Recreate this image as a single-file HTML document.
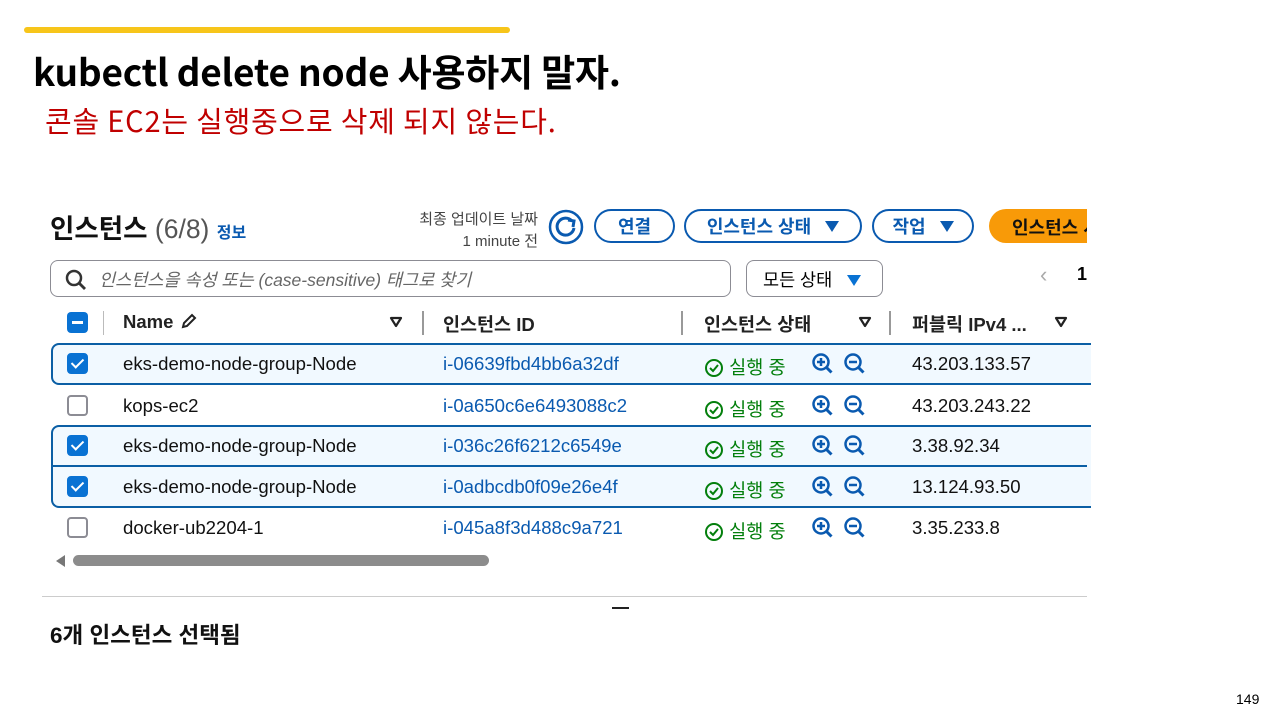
<!DOCTYPE html>
<html><head><meta charset="utf-8"><style>
*{margin:0;padding:0;box-sizing:border-box}
body{width:1280px;height:720px;background:#fff;position:relative;overflow:hidden;font-family:"Liberation Sans","Noto Sans CJK KR",sans-serif;color:#000}
.a{position:absolute;white-space:nowrap}
.btn{position:absolute;height:34px;border:2px solid #0a5ab0;border-radius:17px;color:#0a5ab0;font-weight:bold;font-size:18px;display:flex;align-items:center;justify-content:center;gap:14px}
.tri{display:inline-block;width:0;height:0;border-left:7px solid transparent;border-right:7px solid transparent;border-top:11px solid #0a5ab0}
.row{position:absolute;left:52px;width:1035px;height:41px;font-size:18.6px;color:#111}
.cb{position:absolute;left:15px;top:10px;width:21px;height:21px;border-radius:4px;border:2px solid #8c8c94;background:#fff}
.cb.on{background:#0972d3;border-color:#0972d3}
.cb.on::after{content:"";position:absolute;left:5px;top:1px;width:5px;height:10px;border:solid #fff;border-width:0 2.5px 2.5px 0;transform:rotate(45deg)}
.row span{position:absolute;top:10px}
.id{left:391px;color:#0a5ab0}
.st{left:652px;color:#037f0c}
.ip{left:860px}
.hd{font-weight:bold;font-size:18.5px;color:#222}
</style></head><body>
<div class="a" style="left:24px;top:27px;width:486px;height:6px;background:#f7c51a;border-radius:3px"></div>
<div class="a" style="left:33px;top:43px;font-size:37px;font-weight:bold;font-family:'Noto Sans CJK KR','Liberation Sans',sans-serif;letter-spacing:-0.2px">kubectl delete node 사용하지 말자.</div>
<div class="a" style="left:45px;top:99px;font-size:29px;color:#c00000;font-family:'Noto Sans CJK KR',sans-serif;letter-spacing:0.8px">콘솔 EC2는 실행중으로 삭제 되지 않는다.</div>

<div class="a" style="left:50px;top:207px;font-size:26.5px;font-weight:bold;color:#111">인스턴스 <span style="font-weight:normal;color:#555">(6/8)</span> <span style="font-size:16px;color:#0a5ab0">정보</span></div>
<div class="a" style="left:400px;top:209px;font-size:15px;color:#444;text-align:right;width:138px;line-height:22px">최종 업데이트 날짜<br>1 minute 전</div>
<svg class="a" style="left:548px;top:209px" width="36" height="36" viewBox="0 0 36 36"><circle cx="18" cy="18" r="16" fill="none" stroke="#0a5ab0" stroke-width="2.5"/><path d="M24 12a8.5 8.5 0 1 0 2 7" fill="none" stroke="#0a5ab0" stroke-width="3"/><path d="M20 11l6 1-1 6" fill="none" stroke="#0a5ab0" stroke-width="3"/></svg>
<div class="btn" style="left:594px;top:209px;width:81px">연결</div>
<div class="btn" style="left:684px;top:209px;width:178px">인스턴스 상태 <i class="tri"></i></div>
<div class="btn" style="left:872px;top:209px;width:102px">작업 <i class="tri"></i></div>
<div class="a" style="left:989px;top:209px;width:110px;height:34px;background:#f89a08;border-radius:17px 0 0 17px;font-weight:bold;font-size:18px;padding:5px 0 0 23px;color:#111">인스턴스 시</div>
<div class="a" style="left:1087px;top:200px;width:193px;height:460px;background:#fff"></div>

<div class="a" style="left:50px;top:260px;width:681px;height:37px;border:1.5px solid #8c8c94;border-radius:8px"></div>
<svg class="a" style="left:64px;top:268px" width="24" height="24" viewBox="0 0 24 24"><circle cx="10" cy="10" r="7" fill="none" stroke="#333" stroke-width="2.5"/><path d="M15 15l6 6" stroke="#333" stroke-width="2.8"/></svg>
<div class="a" style="left:99px;top:267px;font-size:17.5px;color:#666;font-style:italic">인스턴스을 속성 또는 (case-sensitive) 태그로 찾기</div>
<div class="a" style="left:746px;top:260px;width:137px;height:37px;border:1.5px solid #8c8c94;border-radius:8px;font-size:17.5px;padding:6px 0 0 16px">모든 상태 <i class="tri" style="margin-left:10px;border-top-color:#0972d3"></i></div>
<div class="a" style="left:1040px;top:262px;font-size:22px;color:#aaa">&lsaquo;</div>
<div class="a" style="left:1077px;top:264px;font-size:18px;font-weight:bold">1</div>

<div class="a" style="left:67px;top:312px;width:21px;height:21px;border-radius:4px;background:#0972d3"><div style="position:absolute;left:5px;top:9px;width:11px;height:3px;background:#fff"></div></div>
<div class="a" style="left:103px;top:311px;width:1px;height:24px;background:#bbb"></div>
<div class="a hd" style="left:123px;top:311px">Name <svg width="20" height="18" viewBox="0 0 20 18" style="vertical-align:-2px"><path d="M4 15l1-4 8-8 3 3-8 8z" fill="none" stroke="#222" stroke-width="2"/></svg></div>
<svg class="a" style="left:389px;top:316px" width="14" height="12" viewBox="0 0 14 12"><path d="M2 2h10L7 10z" fill="none" stroke="#222" stroke-width="2.2" stroke-linejoin="round"/></svg>
<div class="a" style="left:422px;top:311px;width:2px;height:24px;background:#999"></div>
<div class="a hd" style="left:443px;top:311px">인스턴스 ID</div>
<div class="a" style="left:681px;top:311px;width:2px;height:24px;background:#999"></div>
<div class="a hd" style="left:704px;top:311px">인스턴스 상태</div>
<svg class="a" style="left:858px;top:316px" width="14" height="12" viewBox="0 0 14 12"><path d="M2 2h10L7 10z" fill="none" stroke="#222" stroke-width="2.2" stroke-linejoin="round"/></svg>
<div class="a" style="left:889px;top:311px;width:2px;height:24px;background:#999"></div>
<div class="a hd" style="left:912px;top:311px">퍼블릭 IPv4 ...</div>
<svg class="a" style="left:1054px;top:316px" width="14" height="12" viewBox="0 0 14 12"><path d="M2 2h10L7 10z" fill="none" stroke="#222" stroke-width="2.2" stroke-linejoin="round"/></svg>

<div class="a" style="left:51px;top:343px;width:1040px;height:42px;border:2px solid #0b5fa5;border-right:none;border-radius:8px 0 0 8px;background:#f1f9ff"></div>
<div class="a" style="left:51px;top:425px;width:1040px;height:83px;border:2px solid #0b5fa5;border-right:none;border-radius:8px 0 0 8px;background:#f1f9ff"></div>
<div class="a" style="left:53px;top:465px;width:1034px;height:2px;background:#0b5fa5"></div>

<div class="row" style="top:343px"><i class="cb on"></i><span style="left:71px">eks-demo-node-group-Node</span><span class="id">i-06639fbd4bb6a32df</span><span class="st">ST</span><span class="ip">43.203.133.57</span></div>
<div class="row" style="top:385px"><i class="cb"></i><span style="left:71px">kops-ec2</span><span class="id">i-0a650c6e6493088c2</span><span class="st">ST</span><span class="ip">43.203.243.22</span></div>
<div class="row" style="top:425px"><i class="cb on"></i><span style="left:71px">eks-demo-node-group-Node</span><span class="id">i-036c26f6212c6549e</span><span class="st">ST</span><span class="ip">3.38.92.34</span></div>
<div class="row" style="top:466px"><i class="cb on"></i><span style="left:71px">eks-demo-node-group-Node</span><span class="id">i-0adbcdb0f09e26e4f</span><span class="st">ST</span><span class="ip">13.124.93.50</span></div>
<div class="row" style="top:507px"><i class="cb"></i><span style="left:71px">docker-ub2204-1</span><span class="id">i-045a8f3d488c9a721</span><span class="st">ST</span><span class="ip">3.35.233.8</span></div>

<script>
document.querySelectorAll('.st').forEach(function(e){e.innerHTML='<svg width="20" height="20" viewBox="0 0 20 20" style="vertical-align:-4px"><circle cx="10" cy="10" r="8" fill="none" stroke="#037f0c" stroke-width="2"/><path d="M6 10l3 3 5-6" fill="none" stroke="#037f0c" stroke-width="2"/></svg> 실행 중<svg width="24" height="24" viewBox="0 0 24 24" style="position:absolute;left:107px;top:-1px"><circle cx="10" cy="10" r="7.5" fill="none" stroke="#0a5ab0" stroke-width="2.5"/><path d="M15.5 15.5l5 5" stroke="#0a5ab0" stroke-width="3"/><path d="M6 10h8M10 6v8" stroke="#0a5ab0" stroke-width="2.5"/></svg><svg width="24" height="24" viewBox="0 0 24 24" style="position:absolute;left:139px;top:-1px"><circle cx="10" cy="10" r="7.5" fill="none" stroke="#0a5ab0" stroke-width="2.5"/><path d="M15.5 15.5l5 5" stroke="#0a5ab0" stroke-width="3"/><path d="M6 10h8" stroke="#0a5ab0" stroke-width="2.5"/></svg>';});
</script>

<div class="a" style="left:56px;top:555px;width:0;height:0;border-top:6px solid transparent;border-bottom:6px solid transparent;border-right:9px solid #777"></div>
<div class="a" style="left:73px;top:555px;width:416px;height:11px;border-radius:6px;background:#8c8c8c"></div>
<div class="a" style="left:42px;top:596px;width:1045px;height:1px;background:#ccc"></div>
<div class="a" style="left:612px;top:607px;width:17px;height:2px;background:#222"></div>
<div class="a" style="left:50px;top:618px;font-size:22.5px;font-weight:bold;color:#111">6개 인스턴스 선택됨</div>
<div class="a" style="left:1236px;top:691px;font-size:14px">149</div>
</body></html>
